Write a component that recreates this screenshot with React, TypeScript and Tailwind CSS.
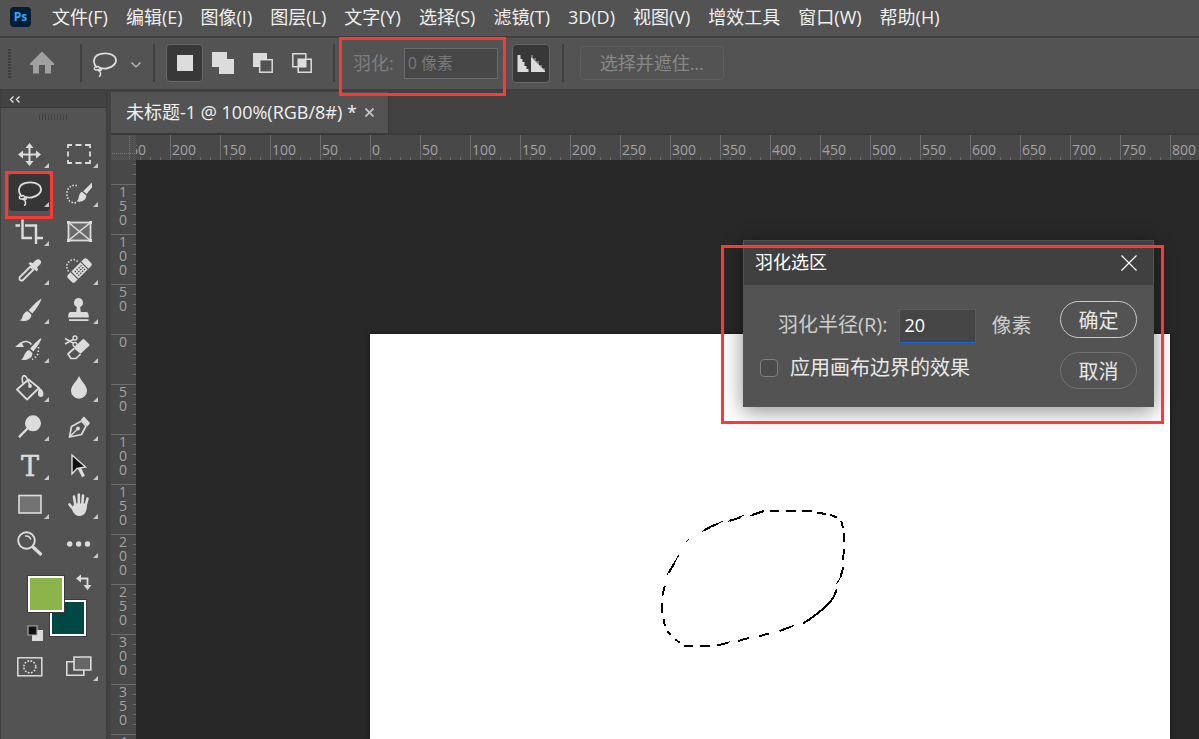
import { useState } from "react";
import type { ReactNode } from "react";

const menus = [
  "文件(F)",
  "编辑(E)",
  "图像(I)",
  "图层(L)",
  "文字(Y)",
  "选择(S)",
  "滤镜(T)",
  "3D(D)",
  "视图(V)",
  "增效工具",
  "窗口(W)",
  "帮助(H)",
];

const columnMarks = [250, 200, 150, 100, 50, 0, 50, 100, 150, 200, 250, 300, 350, 400, 450, 500, 550, 600, 650, 700, 750, 800];
const rowMarks = [150, 100, 50, 0, 50, 100, 150, 200, 250, 300, 350, 400];

const LassoShape = () => (
  <g fill="none" stroke="#dcdcdc" strokeWidth="1.8" strokeLinecap="round">
    <path d="M7.5 19C3 14 4.5 7.500 12 5.900c6.500-1.500 13.500.5 14.800 5 1.200 4.500-3.300 8.600-9.300 9.600-2.500.4-4.500.1-6.500-.6" />
    <path d="M10.500 19.500c-1.500-1.600-5-1-5.200.8-.2 2 3.200 2.400 4.800.9 1-.9 2.300-.9 2.300.2 0 1.400-3 1.500-4.400.3" strokeWidth="1.500" />
    <path d="M9 22c2.500 1.500 3.500 3.500 1.600 6.300" strokeWidth="1.500" />
  </g>
);

type Tool = { id: string; label: string; more: boolean; icon: ReactNode };

const tools: Tool[] = [
  {
    id: "move",
    label: "移动工具",
    more: true,
    icon: (
      <g fill="#dcdcdc">
        <path d="M14.500 9h2v6.500H23v2h-6.500V24h-2v-6.500H8v-2h6.500z" />
        <path d="M15.500 5l4 5h-8zM15.500 28l4-5h-8zM4 16.500l5-4v8zM27 16.500l-5-4v8z" />
      </g>
    ),
  },
  {
    id: "marquee",
    label: "矩形选框工具",
    more: true,
    icon: (
      <path
        d="M5 10V7h4M12.500 7h6M22 7h5v3M27 13.500v5M27 22v3h-5M18.500 25h-6M9 25H5v-3M5 18.500v-5"
        fill="none"
        stroke="#dcdcdc"
        strokeWidth="1.800"
      />
    ),
  },
  { id: "lasso", label: "套索工具", more: true, icon: <LassoShape /> },
  {
    id: "quick-select",
    label: "快速选择工具",
    more: true,
    icon: (
      <g>
        <path d="M14 8.500H9L5.500 11 4 15v5l2.500 4 4 2 3.500-.5" fill="none" stroke="#dcdcdc" strokeWidth="1.600" strokeDasharray="1.500 1.700" />
        <path d="M29 5.500v5l-5.500 6.500-3.300-2.700z" fill="#dcdcdc" />
        <path d="M19 14.800l4.200 3.700c.3 4.300-4.500 7.300-9.700 5.700 2-1 2-3 2.500-5.200.4-1.800 1.500-3.700 3-4.200z" fill="#dcdcdc" />
      </g>
    ),
  },
  {
    id: "crop",
    label: "裁剪工具",
    more: true,
    icon: <path d="M8.500 3.500V22H18M21.500 22H29M1.500 9.500h4.500M11 9.500h11V28" fill="none" stroke="#dcdcdc" strokeWidth="2.400" />,
  },
  {
    id: "frame",
    label: "图框工具",
    more: false,
    icon: (
      <g stroke="#dcdcdc" fill="none">
        <rect x="5.500" y="6.500" width="22" height="18" fill="#6b6b6b" strokeWidth="1.800" />
        <path d="M5.500 6.500l22 18M27.500 6.500l-22 18" strokeWidth="1.600" />
        <path d="M4 6.500h3M26 6.500h3M4 24.500h3M26 24.500h3" strokeWidth="3" />
      </g>
    ),
  },
  {
    id: "eyedropper",
    label: "吸管工具",
    more: true,
    icon: (
      <g>
        <path d="M16.500 11.500l3 3L9 25c-1.200 1.200-4 .8-3.500-2.500z" fill="none" stroke="#dcdcdc" strokeWidth="1.800" strokeLinejoin="round" />
        <path d="M14.500 8.500l2-1.500 2 1.200L22 5c3-2.500 6.500 1 4.500 4L23 12.500l1.200 2-1.700 2z" fill="#dcdcdc" />
      </g>
    ),
  },
  {
    id: "healing",
    label: "污点修复画笔工具",
    more: true,
    icon: (
      <g>
        <path d="M5.500 16.500L4 13v-4l3-3.500 4-1 4 2" fill="none" stroke="#dcdcdc" strokeWidth="1.600" strokeDasharray="1.500 1.700" />
        <g transform="rotate(-45 16.500 15.500)">
          <rect x="3" y="10.500" width="27" height="10" rx="2" fill="#dcdcdc" />
          <path d="M9.500 10v11M23.500 10v11" stroke="#535353" strokeWidth="1.200" />
          <path d="M12 13.300h9.500M12 15.800h9.500M12 18.300h9.500" stroke="#535353" strokeWidth="1.300" strokeDasharray="1.500 1.200" />
        </g>
      </g>
    ),
  },
  {
    id: "brush",
    label: "画笔工具",
    more: true,
    icon: (
      <g fill="#dcdcdc">
        <path d="M27.500 4.500c-4 2-9.500 8-12.800 11.800l3.500 3.200C22.200 15 26.500 9 27.500 4.500z" />
        <path d="M13.800 17.200l3.500 3.200c.5 4.600-4.800 7.900-11.800 6.200 2.500-1 2.500-3 3.500-5.400 1-2.400 2.800-3.900 4.800-4z" />
      </g>
    ),
  },
  {
    id: "stamp",
    label: "仿制图章工具",
    more: true,
    icon: (
      <g fill="#dcdcdc">
        <circle cx="15.500" cy="8.700" r="4.600" />
        <path d="M14 12h3l.8 6H23c2 0 2.800 1.500 2.800 5.500H5.200C5.200 19.500 6 18 8 18h5.200z" />
        <path d="M6 25.200h19.500V27H6z" />
      </g>
    ),
  },
  {
    id: "history-brush",
    label: "历史记录画笔工具",
    more: true,
    icon: (
      <g fill="#dcdcdc">
        <path d="M27.500 5c-3.500 1.700-8.500 7-11.400 10.700l3.200 2.800C22.500 14.500 26.500 9.500 27.500 5z" />
        <path d="M15.300 17l3.100 2.900c.4 4.400-4 7.700-11.400 6.900 2.200-1.200 2.500-3 3.500-5.200.9-2.200 2.800-4.400 4.800-4.600z" />
        <path d="M1 14l6-5 3 5z" />
        <path d="M7 10.500c3-3 8-2.500 10.500 1" fill="none" stroke="#dcdcdc" strokeWidth="1.600" />
        <path d="M24.500 14v3l-.5 4-3 3.500-3 2" fill="none" stroke="#dcdcdc" strokeWidth="1.600" strokeDasharray="1.500 2" />
      </g>
    ),
  },
  {
    id: "eraser",
    label: "橡皮擦工具",
    more: true,
    icon: (
      <g>
        <path d="M20.500 7l5 5-8 7.500-5.500-4.500z" fill="#dcdcdc" stroke="#dcdcdc" strokeWidth="2" strokeLinejoin="round" />
        <path d="M11 15.500L5 21l3 4.500h5l4.500-4.500" fill="none" stroke="#dcdcdc" strokeWidth="1.700" strokeLinejoin="round" />
        <path d="M2 5.500l10 5.500M2 11l10-5.500" stroke="#dcdcdc" strokeWidth="1.500" />
        <circle cx="12" cy="5" r="2" fill="#535353" stroke="#dcdcdc" strokeWidth="1.300" />
        <circle cx="12" cy="11.500" r="2" fill="#535353" stroke="#dcdcdc" strokeWidth="1.300" />
      </g>
    ),
  },
  {
    id: "bucket",
    label: "油漆桶工具",
    more: true,
    icon: (
      <g>
        <path d="M3 17.500L14.500 7.500 25 16 13 27.500z" fill="none" stroke="#dcdcdc" strokeWidth="1.800" strokeLinejoin="round" />
        <path d="M9 11.500C6.500 3 11 1.500 13 6.500l3 7" fill="none" stroke="#dcdcdc" strokeWidth="1.600" />
        <circle cx="16" cy="14" r="1.900" fill="#dcdcdc" />
        <path d="M24 15c4 1.500 5.500 4.500 5.500 7.300 0 3.500-5.300 3.400-5.500 0-.1-2 .8-3.300 0-7.300z" fill="#dcdcdc" />
      </g>
    ),
  },
  {
    id: "blur",
    label: "模糊工具",
    more: true,
    icon: <path d="M16 4c2 5 8 9.500 8 14.700a8 8 0 0 1-16 0C8 13.500 14 9 16 4z" fill="#dcdcdc" />,
  },
  {
    id: "dodge",
    label: "减淡工具",
    more: true,
    icon: (
      <g>
        <circle cx="19" cy="12.300" r="8" fill="#dcdcdc" />
        <path d="M13.500 17.500L5 26.200" stroke="#dcdcdc" strokeWidth="2.400" />
      </g>
    ),
  },
  {
    id: "pen",
    label: "钢笔工具",
    more: true,
    icon: (
      <g>
        <path d="M6.500 26l2-10.500L18.500 10l4.500 5-4.500 8.500z" fill="none" stroke="#dcdcdc" strokeWidth="1.700" strokeLinejoin="round" />
        <path d="M7 25.500l7-7" stroke="#dcdcdc" strokeWidth="1.400" />
        <circle cx="15" cy="17.500" r="1.900" fill="#dcdcdc" />
        <path d="M18 8.500l3-3 6 6.500-2.500 3.500z" fill="#dcdcdc" />
      </g>
    ),
  },
  {
    id: "type",
    label: "横排文字工具",
    more: true,
    icon: (
      <text
        x="16"
        y="26"
        textAnchor="middle"
        fontSize="27"
        fontFamily="DejaVu Serif, serif"
        fill="#dcdcdc"
        stroke="#dcdcdc"
        strokeWidth="0.500"
      >
        T
      </text>
    ),
  },
  {
    id: "path-select",
    label: "路径选择工具",
    more: true,
    icon: (
      <g>
        <path d="M16 17.500l4.500 9" stroke="#dcdcdc" strokeWidth="3.200" />
        <path d="M9 5v19l5-5.500 8.500-1.500z" fill="#111111" stroke="#dcdcdc" strokeWidth="1.400" />
      </g>
    ),
  },
  {
    id: "rectangle",
    label: "矩形工具",
    more: true,
    icon: <rect x="5" y="6.500" width="22" height="17.500" fill="#737373" stroke="#dcdcdc" strokeWidth="1.600" />,
  },
  {
    id: "hand",
    label: "抓手工具",
    more: true,
    icon: (
      <g>
        <path d="M12.300 16L11 7.500M15.800 15V5.500M19.300 15.500l.7-9M22.500 17l2-7.500M11 21l-4.500-5.500" stroke="#dcdcdc" strokeWidth="2.600" strokeLinecap="round" />
        <path d="M9.500 18l2-3.500h12l.5 3c-.5 5-2.500 9.500-7.500 9.500-3.500 0-5-1.500-7-5z" fill="#dcdcdc" />
      </g>
    ),
  },
  {
    id: "zoom",
    label: "缩放工具",
    more: false,
    icon: (
      <g fill="none" stroke="#dcdcdc">
        <circle cx="12.500" cy="12.500" r="8.300" strokeWidth="1.900" />
        <path d="M11 8c3-.5 5 1 5.800 3.500" strokeWidth="1.500" />
        <path d="M19 19l7.500 7" strokeWidth="3.200" strokeLinecap="round" />
      </g>
    ),
  },
  {
    id: "more",
    label: "编辑工具栏",
    more: true,
    icon: (
      <g fill="#dcdcdc">
        <circle cx="6.700" cy="16" r="2.700" />
        <circle cx="15.600" cy="16" r="2.700" />
        <circle cx="24.500" cy="16" r="2.700" />
      </g>
    ),
  },
];

const Divider = () => <div className="h-[38px] w-[2px] shrink-0 bg-[#3f3f3f]" />;

const MoreCorner = () => (
  <svg className="absolute right-[5px] bottom-[5px] h-[5px] w-[5px]" viewBox="0 0 5 5" aria-hidden="true">
    <path d="M5 0v5H0z" fill="#c8c8c8" />
  </svg>
);

const MenuBar = () => (
  <nav className="flex h-9 shrink-0 items-center bg-[#535353] pb-[2px] pl-[10px]">
    <span className="flex h-5 w-[21px] items-center justify-center rounded bg-[#001e36] text-[12px] font-bold text-[#31a8ff]">
      Ps
    </span>
    <div className="ml-[21px] flex gap-[18px]">
      {menus.map((menu) => (
        <button key={menu} type="button" className="whitespace-nowrap text-[18px] leading-[26px] text-[#f0f0f0]">
          {menu}
        </button>
      ))}
    </div>
  </nav>
);

const OptionsBar = () => (
  <div className="flex h-[55px] shrink-0 items-center border-y-2 border-[#3f3f3f] bg-[#535353] pb-px pl-2">
    <div className="h-[29px] w-[3px] bg-[repeating-linear-gradient(to_bottom,#3f3f3f_0_2px,#535353_2px_3px)]" />
    <button type="button" aria-label="主页" className="ml-[19px]">
      <svg className="h-6 w-6" viewBox="0 0 24 24">
        <path d="M12 .5L24 12.500v1.500h-3v8.500h-6V14H9v8.500H3V14H0v-1.500z" fill="#a0a0a0" />
      </svg>
    </button>
    <div className="ml-[26px]">
      <Divider />
    </div>
    <button type="button" aria-label="工具预设" className="ml-[7px] flex items-center gap-[11px]">
      <svg className="h-[31px] w-[31px]" viewBox="0 0 31 31">
        <LassoShape />
      </svg>
      <svg className="h-[10px] w-[10px]" viewBox="0 0 10 10">
        <path d="M.5 4.500L5 9 9.500 4.500" fill="none" stroke="#c0c0c0" strokeWidth="1.200" />
      </svg>
    </button>
    <div className="ml-3">
      <Divider />
    </div>
    <div className="ml-[11px] flex items-center">
      <button type="button" aria-label="新选区" className="flex h-[38px] w-[37px] items-center justify-center rounded-sm border border-[#676767] bg-[#383838]">
        <span className="h-4 w-4 bg-[#dcdcdc]" />
      </button>
      <button type="button" aria-label="添加到选区" className="flex h-[38px] w-10 items-center justify-center">
        <svg className="h-[22px] w-[22px]" viewBox="0 0 22 22">
          <path d="M0 0h15v7h7v15H7v-7H0z" fill="#dcdcdc" />
        </svg>
      </button>
      <button type="button" aria-label="从选区减去" className="flex h-[38px] w-[39px] items-center justify-center">
        <svg className="h-5 w-5" viewBox="0 0 20 20">
          <path d="M0 0h14v6H6v8H0z" fill="#dcdcdc" />
          <rect x="6.700" y="6.700" width="12.500" height="12.500" fill="none" stroke="#dcdcdc" strokeWidth="1.500" />
        </svg>
      </button>
      <button type="button" aria-label="与选区交叉" className="flex h-[38px] w-[39px] items-center justify-center">
        <svg className="h-5 w-5" viewBox="0 0 20 20">
          <rect x="6" y="6" width="8" height="8" fill="#dcdcdc" />
          <path d="M.8.800h13v13H.8zM6.200 6.200h13v13h-13z" fill="none" stroke="#dcdcdc" strokeWidth="1.500" />
        </svg>
      </button>
    </div>
    <div className="ml-3">
      <Divider />
    </div>
    <div className="relative ml-[18px] flex items-center gap-[10px]">
      <label htmlFor="feather" className="whitespace-nowrap text-[18px] text-[#7e7e7e]">
        羽化:
      </label>
      <input
        id="feather"
        disabled
        defaultValue="0 像素"
        className="h-[31px] w-[94px] border border-[#6b6b6b] bg-[#474747] px-[3px] pb-[2px] text-[16px] text-[#787878]"
      />
      <div className="pointer-events-none absolute -top-[11px] -right-2 -bottom-[17px] -left-[14px] z-20 border-3 border-[#fb3a37]" />
    </div>
    <button type="button" aria-label="消除锯齿" className="ml-[14px] flex h-[39px] w-[38px] items-center justify-center rounded-sm border border-[#676767] bg-[#383838]">
      <svg className="h-[18px] w-7" viewBox="0 0 28 18">
        <path d="M.5 1h3v4h2v3h2v4h2v3h2v3H.5z" fill="#dcdcdc" />
        <path d="M14 1h2v3h3v3h3v4h3v3h3v4H14z" fill="#777777" />
        <path d="M14 3l14 14v1H14z" fill="#dcdcdc" />
      </svg>
    </button>
    <div className="ml-3">
      <Divider />
    </div>
    <button type="button" disabled className="ml-4 h-[34px] w-36 whitespace-nowrap rounded border border-[#5e5e5e] text-[18px] leading-[30px] text-[#888888]">
      选择并遮住...
    </button>
  </div>
);

const Toolbox = () => {
  const [active, setActive] = useState("lasso");

  return (
    <aside className="flex w-[108px] shrink-0 flex-col border-r-2 border-l border-[#3f3f3f] bg-[#535353]">
      <div className="flex h-[17px] items-center border-b border-[#3a3a3a] bg-[#424242] pl-2">
        <button type="button" aria-label="折叠面板">
          <svg className="h-[7px] w-3" viewBox="0 0 12 7">
            <path d="M4.500.5l-3 3 3 3M10.500.5l-3 3 3 3" fill="none" stroke="#e0e0e0" strokeWidth="1.400" />
          </svg>
        </button>
      </div>
      <div className="mx-auto mt-[6px] h-[6px] w-[29px] bg-[repeating-linear-gradient(to_right,#414141_0_1px,#535353_1px_3px)]" />

      <div className="mt-[14px] grid grid-cols-[49px_49px] pl-1">
        {tools.map((tool) => (
          <button
            key={tool.id}
            type="button"
            aria-label={tool.label}
            onClick={() => setActive(tool.id)}
            className="relative flex h-[39px] items-center justify-center"
          >
            {active === tool.id && <span className="absolute inset-x-1 inset-y-[1px] rounded-sm bg-[#363636]" />}
            <svg className="relative h-[31px] w-[31px]" viewBox="0 0 31 31">
              {tool.icon}
            </svg>
            {tool.more && <MoreCorner />}
            {tool.id === "lasso" && (
              <span className="pointer-events-none absolute -top-[2px] right-px -bottom-[7px] left-0 z-10 border-3 border-[#fb3a37]" />
            )}
          </button>
        ))}
      </div>

      {/* Foreground and background colours */}
      <div className="relative h-[84px]">
        <button type="button" aria-label="背景色" className="absolute top-[37px] left-[49px] h-9 w-9 border-2 border-white bg-[#004846] outline outline-[#3a3a3a]" />
        <button type="button" aria-label="前景色" className="absolute top-[13px] left-[27px] h-9 w-9 border-2 border-white bg-[#8bb54b] outline outline-[#3a3a3a]" />
        <button type="button" aria-label="切换前景色和背景色" className="absolute top-[11px] left-[75px]">
          <svg className="h-4 w-4" viewBox="0 0 16 16">
            <path d="M4 4.500h7.500V11" fill="none" stroke="#dcdcdc" strokeWidth="1.800" />
            <path d="M0 4.500L5 .5v8zM11.500 16l-4-5h8z" fill="#dcdcdc" />
          </svg>
        </button>
        <button type="button" aria-label="默认前景色和背景色" className="absolute top-[62px] left-[26px]">
          <svg className="h-4 w-4" viewBox="0 0 16 16">
            <path d="M5 5h11v11H5z" fill="#dcdcdc" />
            <path d="M1 1h9v9H1z" fill="#111111" stroke="#aaaaaa" strokeWidth="1.200" />
          </svg>
        </button>
      </div>

      <div className="grid grid-cols-[49px_49px] pl-1">
        <button type="button" aria-label="以快速蒙版模式编辑" className="flex h-[39px] items-center justify-center">
          <svg className="h-[31px] w-[31px]" viewBox="0 0 31 31">
            <rect x="3.800" y="6.800" width="24" height="18" fill="none" stroke="#dcdcdc" strokeWidth="1.500" />
            <circle cx="15.800" cy="15.800" r="6" fill="none" stroke="#dcdcdc" strokeWidth="1.600" strokeDasharray="1.700 1.440" />
          </svg>
        </button>
        <button type="button" aria-label="更改屏幕模式" className="relative flex h-[39px] items-center justify-center">
          <svg className="h-[31px] w-[31px]" viewBox="0 0 31 31">
            <path d="M3.800 10.800h17v13.500h-17z" fill="none" stroke="#dcdcdc" strokeWidth="1.600" />
            <path d="M11 6h16.800v13H11z" fill="#666666" stroke="#dcdcdc" strokeWidth="1.600" />
          </svg>
          <MoreCorner />
        </button>
      </div>
    </aside>
  );
};

const HorizontalRuler = () => (
  <div className="h-[25px] flex-1 overflow-hidden bg-[#484848]">
    <div className="-ml-4 flex h-full">
      {columnMarks.map((mark, index) => (
        <div key={index} className="relative flex w-[50px] shrink-0 border-l border-[#6c6c6c] pl-px">
          <span className="pt-[5px] text-[14px] leading-[20px] text-[#a3a3a3]">{mark}</span>
          <div className="absolute bottom-0 left-[9px] flex gap-[9px]">
            {[1, 2, 3, 4].map((tick) => (
              <span key={tick} className="h-[3px] w-px bg-[#6c6c6c]" />
            ))}
          </div>
        </div>
      ))}
    </div>
  </div>
);

const VerticalRuler = () => (
  <div className="w-[25px] shrink-0 overflow-hidden bg-[#484848]">
    <div className="flex h-6 flex-col items-end gap-[9px] pt-1">
      <span className="h-px w-[3px] bg-[#6c6c6c]" />
      <span className="h-px w-[3px] bg-[#6c6c6c]" />
    </div>
    {rowMarks.map((mark, index) => (
      <div key={index} className="relative flex h-[50px] flex-col border-t border-[#6c6c6c] pl-2">
        {String(mark)
          .split("")
          .map((digit, place) => (
            <span key={place} className="h-[14px] text-[14px] leading-[14px] text-[#a3a3a3]">
              {digit}
            </span>
          ))}
        <div className="absolute top-[9px] right-0 flex flex-col gap-[9px]">
          {[1, 2, 3, 4].map((tick) => (
            <span key={tick} className="h-px w-[3px] bg-[#6c6c6c]" />
          ))}
        </div>
      </div>
    ))}
  </div>
);

const Selection = () => (
  <svg className="absolute top-[156px] left-[270px] h-[180px] w-[230px]" viewBox="0 0 690 540" shapeRendering="crispEdges" aria-hidden="true">
    <g fill="none" stroke="#000000" strokeWidth="6">
      <path d="M390 63h28M438 63h29M487 63h28M532 68l25 4M571 75l20 7M604 93l5 22M612 130v27M612 178l-3 32M610 232l-9 30" />
      <path d="M590 298c-6 22-16 36-28 47-24 22-44 38-72 55" />
      <path d="M419 423l34-13M357 439l31-9M294 453l32-9M230 467l34-9M181 468h28M133 468h27M119 458l-13-10M93 434l-11-11M75 409l-4-22M66 368v-29M67 317l7-29" />
      <path d="M86 248l18-30M192 121c14-8 30-16 44-21M270 92l32-10M336 75l36-12" />
    </g>
    <path
      d="M601 262l-11 20M453 410l9-4M264 458l6-4M81 255l35-59M138 155l8-6M186 125l62-31M263 95l48-19M330 77l8-3"
      fill="none"
      stroke="#000000"
      strokeWidth="3"
    />
  </svg>
);

const FeatherDialog = () => {
  const [radius, setRadius] = useState("20");

  return (
    <div className="absolute top-[80px] left-[607px]">
      <section
        role="dialog"
        aria-labelledby="feather-title"
        className="w-[411px] border border-[#535353] bg-[#535353] shadow-[0_4px_20px_rgba(0,0,0,0.45)]"
      >
        <header className="flex h-11 items-center justify-between bg-[#404040] pr-4 pb-px pl-[11px]">
          <h2 id="feather-title" className="text-[18px] text-white">
            羽化选区
          </h2>
          <button type="button" aria-label="关闭">
            <svg className="h-4 w-4" viewBox="0 0 16 16">
              <path d="M.5.500l15 15M15.500.500l-15 15" stroke="#ffffff" strokeWidth="1.200" />
            </svg>
          </button>
        </header>
        <div className="flex justify-between pt-4 pr-4 pb-[17px] pl-4">
          <div className="pt-2">
            <div className="flex items-center pl-[18px] text-[20px] text-[#cccccc]">
              <label htmlFor="radius" className="whitespace-nowrap pb-[2px] leading-[30px]">
                羽化半径(R):
              </label>
              <input
                id="radius"
                value={radius}
                onChange={(e) => setRadius(e.target.value)}
                className="ml-3 h-[34px] w-[77px] border border-[#1566dc] bg-[#454545] px-1 pb-[2px] text-[18px] font-medium text-white outline-none"
              />
              <span className="ml-[15px]">像素</span>
            </div>
            <label className="mt-[10px] flex items-center gap-3 text-[20px] leading-[30px] text-[#e8e8e8]">
              <input type="checkbox" className="h-[18px] w-[18px] appearance-none rounded border border-[#808080] bg-[#4a4a4a]" />
              应用画布边界的效果
            </label>
          </div>
          <div className="flex flex-col gap-[14px]">
            <button type="button" className="h-[37px] w-[77px] rounded-full border border-[#c8c8c8] pt-[2px] text-[20px] text-[#e8e8e8]">
              确定
            </button>
            <button type="button" className="h-[37px] w-[77px] rounded-full border border-[#757575] pt-[2px] text-[20px] text-[#e8e8e8]">
              取消
            </button>
          </div>
        </div>
      </section>
      <div className="pointer-events-none absolute top-[5px] -right-[10px] -bottom-[17px] -left-[22px] border-3 border-[#fb3a37]" />
    </div>
  );
};

const Workspace = () => (
  <main className="ml-[3px] flex min-w-0 flex-1 flex-col">
    <div className="flex h-11 shrink-0 border-b-2 border-[#3a3a3a] pt-px">
      <div className="flex items-center gap-2 border-r border-[#383838] bg-[#535353] pr-[14px] pl-[15px]">
        <span className="whitespace-nowrap pb-[2px] text-[18px] leading-[26px] text-[#f0f0f0]">未标题-1 @ 100%(RGB/8#) *</span>
        <button type="button" aria-label="关闭文档">
          <svg className="h-[9px] w-[9px]" viewBox="0 0 9 9">
            <path d="M.5.500l8 8M8.500.500l-8 8" stroke="#c4c4c4" strokeWidth="1.800" />
          </svg>
        </button>
      </div>
    </div>

    <div className="flex shrink-0">
      <svg className="h-[25px] w-[25px] bg-[#505050]" viewBox="0 0 25 25" aria-hidden="true">
        <path d="M18.500 1v24M1 18.500h24" stroke="#757575" strokeDasharray="1 1" />
      </svg>
      <HorizontalRuler />
    </div>

    <div className="flex min-h-0 flex-1">
      <VerticalRuler />
      <div className="relative flex-1 overflow-hidden bg-[#282828]">
        <div className="absolute top-[174px] bottom-0 left-[234px] w-[800px] bg-white shadow-[0_0_4px_rgba(0,0,0,0.6)]">
          <Selection />
        </div>
        <FeatherDialog />
      </div>
    </div>
  </main>
);

export default function App() {
  return (
    <div className="flex h-screen flex-col overflow-hidden bg-[#424242] font-['Open_Sans','Noto_Sans_CJK_SC',sans-serif]">
      <MenuBar />
      <OptionsBar />
      <div className="flex min-h-0 flex-1">
        <Toolbox />
        <Workspace />
      </div>
    </div>
  );
}
